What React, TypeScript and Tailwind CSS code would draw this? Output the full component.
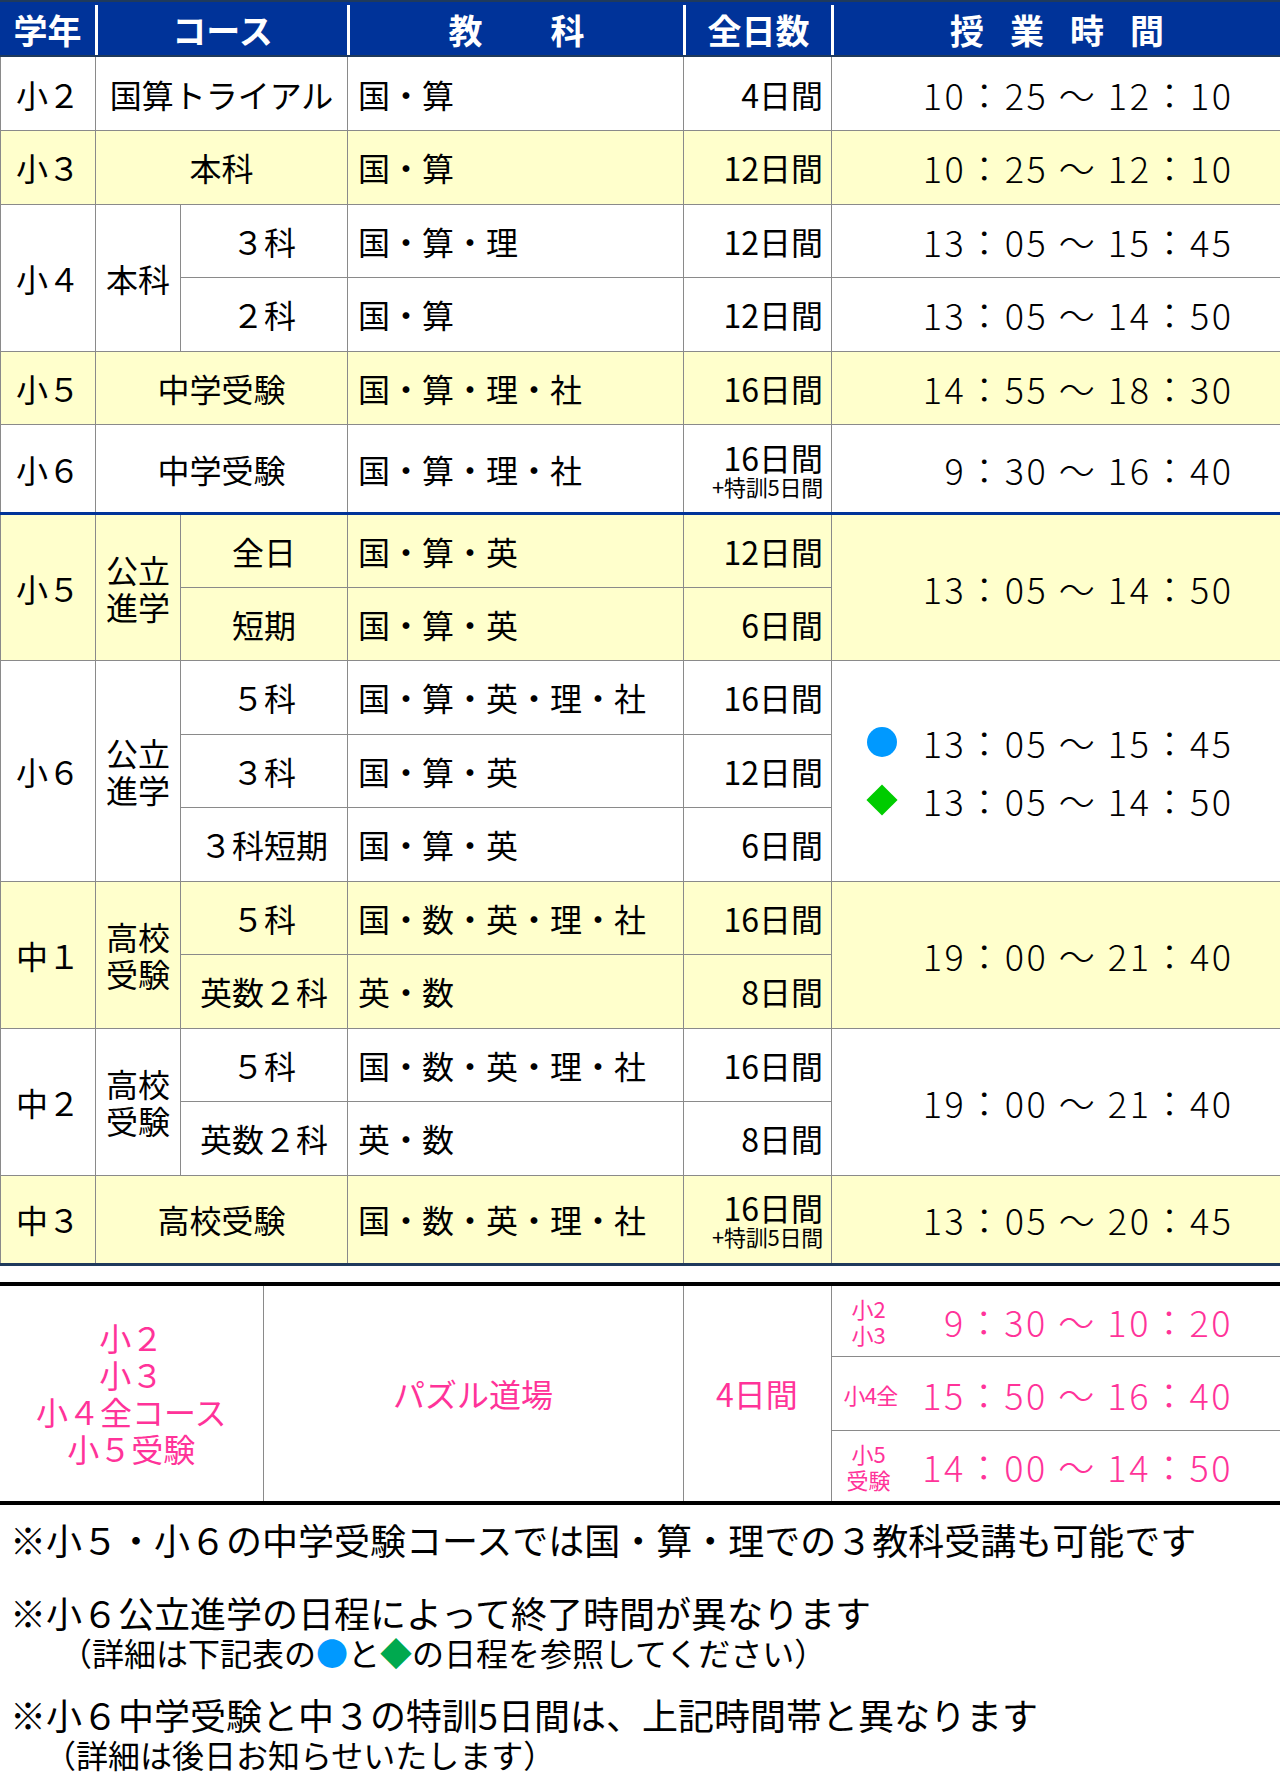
import React from "react"

const Y = "bg-[#ffffcc]"
const td = "border border-[#8a8a8a] p-0"
const grade = `${td} text-center text-[32px] leading-none`
const course = `${td} text-center text-[32px] leading-none`
const subj = `${td} pl-[10px] text-[32px] leading-none`
const days = `${td} text-right pr-[8px] text-[32px] leading-none`
const time = `${td} text-right pr-[47px] text-[36px] leading-none font-light tracking-[0.07em]`

function TwoLine({ a, b }: { a: string; b: string }) {
  return (
    <div className="flex flex-col items-center text-[32px] leading-[37px]">
      <span>{a}</span>
      <span>{b}</span>
    </div>
  )
}

function DaysExtra({ d }: { d: string }) {
  return (
    <div className="flex flex-col items-end">
      <span className="text-[32px] leading-[34px]">{d}</span>
      <span className="text-[22px] leading-[24px] tracking-[-0.01em]">+特訓5日間</span>
    </div>
  )
}

function Header() {
  const sep = "flex items-center justify-center self-stretch mt-[3px] border-l-[3px] border-white"
  return (
    <div className="flex h-[57px] bg-[#003399] border-y-2 border-[#1f3a5c] text-white font-bold text-[34px] leading-none">
      <div className="w-[95px] flex items-center justify-center mt-[3px]">学年</div>
      <div className={`w-[252px] ${sep}`}>コース</div>
      <div className={`w-[336px] ${sep}`}>教　　科</div>
      <div className={`w-[148px] ${sep}`}>全日数</div>
      <div className={`w-[449px] ${sep} gap-[26px]`}>
        <span>授</span>
        <span>業</span>
        <span>時</span>
        <span>間</span>
      </div>
    </div>
  )
}

function MainTable() {
  const row = "h-[73.5px]"
  return (
    <table className="w-full table-fixed border-collapse">
      <colgroup>
        <col className="w-[95px]" />
        <col className="w-[85px]" />
        <col className="w-[167px]" />
        <col className="w-[336px]" />
        <col className="w-[148px]" />
        <col className="w-[449px]" />
      </colgroup>
      <tbody>
        <tr className={row}>
          <td className={`${grade} border-t-0`}>小２</td>
          <td colSpan={2} className={`${course} border-t-0`}>国算トライアル</td>
          <td className={`${subj} border-t-0`}>国・算</td>
          <td className={`${days} border-t-0`}>4日間</td>
          <td className={`${time} border-t-0 border-r-0`}>10：25 ～ 12：10</td>
        </tr>
        <tr className={`${row} ${Y}`}>
          <td className={grade}>小３</td>
          <td colSpan={2} className={course}>本科</td>
          <td className={subj}>国・算</td>
          <td className={days}>12日間</td>
          <td className={`${time} border-r-0`}>10：25 ～ 12：10</td>
        </tr>
        <tr className={row}>
          <td rowSpan={2} className={grade}>小４</td>
          <td rowSpan={2} className={course}>本科</td>
          <td className={course}>３科</td>
          <td className={subj}>国・算・理</td>
          <td className={days}>12日間</td>
          <td className={`${time} border-r-0`}>13：05 ～ 15：45</td>
        </tr>
        <tr className={row}>
          <td className={course}>２科</td>
          <td className={subj}>国・算</td>
          <td className={days}>12日間</td>
          <td className={`${time} border-r-0`}>13：05 ～ 14：50</td>
        </tr>
        <tr className={`${row} ${Y}`}>
          <td className={grade}>小５</td>
          <td colSpan={2} className={course}>中学受験</td>
          <td className={subj}>国・算・理・社</td>
          <td className={days}>16日間</td>
          <td className={`${time} border-r-0`}>14：55 ～ 18：30</td>
        </tr>
        <tr className="h-[89px]">
          <td className={`${grade} border-b-[3px] border-b-[#003399]`}>小６</td>
          <td colSpan={2} className={`${course} border-b-[3px] border-b-[#003399]`}>中学受験</td>
          <td className={`${subj} border-b-[3px] border-b-[#003399]`}>国・算・理・社</td>
          <td className={`${days} border-b-[3px] border-b-[#003399]`}>
            <DaysExtra d="16日間" />
          </td>
          <td className={`${time} border-r-0 border-b-[3px] border-b-[#003399]`}>9：30 ～ 16：40</td>
        </tr>

        <tr className={`${row} ${Y}`}>
          <td rowSpan={2} className={`${grade} border-t-0`}>小５</td>
          <td rowSpan={2} className={`${td} border-t-0`}>
            <TwoLine a="公立" b="進学" />
          </td>
          <td className={`${course} border-t-0`}>全日</td>
          <td className={`${subj} border-t-0`}>国・算・英</td>
          <td className={`${days} border-t-0`}>12日間</td>
          <td rowSpan={2} className={`${time} border-t-0 border-r-0`}>13：05 ～ 14：50</td>
        </tr>
        <tr className={`${row} ${Y}`}>
          <td className={course}>短期</td>
          <td className={subj}>国・算・英</td>
          <td className={days}>6日間</td>
        </tr>

        <tr className={row}>
          <td rowSpan={3} className={grade}>小６</td>
          <td rowSpan={3} className={td}>
            <TwoLine a="公立" b="進学" />
          </td>
          <td className={course}>５科</td>
          <td className={subj}>国・算・英・理・社</td>
          <td className={days}>16日間</td>
          <td rowSpan={3} className={`${td} border-r-0`}>
            <div className="flex flex-col items-end pr-[47px] gap-[20px] text-[36px] leading-[38px] font-light tracking-[0.07em]">
              <div className="flex items-center">
                <span className="w-[30px] h-[30px] rounded-full bg-[#0099ff] mr-[26px]" />
                <span>13：05 ～ 15：45</span>
              </div>
              <div className="flex items-center">
                <span className="w-[22px] h-[22px] rotate-45 bg-[#00cc00] mr-[30px] ml-[4px]" />
                <span>13：05 ～ 14：50</span>
              </div>
            </div>
          </td>
        </tr>
        <tr className={row}>
          <td className={course}>３科</td>
          <td className={subj}>国・算・英</td>
          <td className={days}>12日間</td>
        </tr>
        <tr className={row}>
          <td className={course}>３科短期</td>
          <td className={subj}>国・算・英</td>
          <td className={days}>6日間</td>
        </tr>

        <tr className={`${row} ${Y}`}>
          <td rowSpan={2} className={grade}>中１</td>
          <td rowSpan={2} className={td}>
            <TwoLine a="高校" b="受験" />
          </td>
          <td className={course}>５科</td>
          <td className={subj}>国・数・英・理・社</td>
          <td className={days}>16日間</td>
          <td rowSpan={2} className={`${time} border-r-0`}>19：00 ～ 21：40</td>
        </tr>
        <tr className={`${row} ${Y}`}>
          <td className={course}>英数２科</td>
          <td className={subj}>英・数</td>
          <td className={days}>8日間</td>
        </tr>

        <tr className={row}>
          <td rowSpan={2} className={grade}>中２</td>
          <td rowSpan={2} className={td}>
            <TwoLine a="高校" b="受験" />
          </td>
          <td className={course}>５科</td>
          <td className={subj}>国・数・英・理・社</td>
          <td className={days}>16日間</td>
          <td rowSpan={2} className={`${time} border-r-0`}>19：00 ～ 21：40</td>
        </tr>
        <tr className={row}>
          <td className={course}>英数２科</td>
          <td className={subj}>英・数</td>
          <td className={days}>8日間</td>
        </tr>

        <tr className={`h-[89px] ${Y}`}>
          <td className={`${grade} border-b-[3px] border-b-[#1f3a5c]`}>中３</td>
          <td colSpan={2} className={`${course} border-b-[3px] border-b-[#1f3a5c]`}>高校受験</td>
          <td className={`${subj} border-b-[3px] border-b-[#1f3a5c]`}>国・数・英・理・社</td>
          <td className={`${days} border-b-[3px] border-b-[#1f3a5c]`}>
            <DaysExtra d="16日間" />
          </td>
          <td className={`${time} border-r-0 border-b-[3px] border-b-[#1f3a5c]`}>13：05 ～ 20：45</td>
        </tr>
      </tbody>
    </table>
  )
}

function PuzzleTable() {
  const p = "border border-[#8a8a8a] p-0"
  const t = "text-[36px] leading-none font-light tracking-[0.07em]"
  return (
    <div className="border-y-4 border-black">
      <table className="w-full table-fixed border-collapse text-[#ff3399]">
        <colgroup>
          <col className="w-[263px]" />
          <col className="w-[420px]" />
          <col className="w-[148px]" />
          <col className="w-[449px]" />
        </colgroup>
        <tbody>
          <tr className="h-[71px]">
            <td rowSpan={3} className={`${p} border-y-0 border-l-0`}>
              <div className="flex flex-col items-center text-[32px] leading-[37px]">
                <span>小２</span>
                <span>小３</span>
                <span>小４全コース</span>
                <span>小５受験</span>
              </div>
            </td>
            <td rowSpan={3} className={`${p} border-y-0 text-center text-[32px] leading-none`}>パズル道場</td>
            <td rowSpan={3} className={`${p} border-y-0 text-center text-[32px] leading-none`}>4日間</td>
            <td className={`${p} border-t-0 border-r-0`}>
              <div className="flex items-center">
                <div className="w-[74px] flex flex-col items-center text-[22px] leading-[26px]">
                  <span>小2</span>
                  <span>小3</span>
                </div>
                <div className={`flex-1 text-right pr-[47px] ${t}`}>9：30 ～ 10：20</div>
              </div>
            </td>
          </tr>
          <tr className="h-[74px]">
            <td className={`${p} border-r-0`}>
              <div className="flex items-center">
                <div className="w-[78px] flex flex-col items-center text-[22px] leading-[26px] tracking-[-0.03em]">
                  <span>小4全</span>
                </div>
                <div className={`flex-1 text-right pr-[47px] ${t}`}>15：50 ～ 16：40</div>
              </div>
            </td>
          </tr>
          <tr className="h-[70px]">
            <td className={`${p} border-b-0 border-r-0`}>
              <div className="flex items-center">
                <div className="w-[74px] flex flex-col items-center text-[22px] leading-[26px]">
                  <span>小5</span>
                  <span>受験</span>
                </div>
                <div className={`flex-1 text-right pr-[47px] ${t}`}>14：00 ～ 14：50</div>
              </div>
            </td>
          </tr>
        </tbody>
      </table>
    </div>
  )
}

function Notes() {
  return (
    <div className="pt-[14px] pl-[10px] text-black">
      <p className="text-[36px] leading-[40px] whitespace-nowrap">※小５・小６の中学受験コースでは国・算・理での３教科受講も可能です</p>
      <p className="mt-[33px] text-[36px] leading-[40px] whitespace-nowrap">※小６公立進学の日程によって終了時間が異なります</p>
      <p className="pl-[50px] text-[32px] leading-[40px] whitespace-nowrap">
        （詳細は下記表の<span className="text-[#0099ff]">●</span>と<span className="text-[#00a94f]">◆</span>の日程を参照してください）
      </p>
      <p className="mt-[22px] text-[36px] leading-[40px] whitespace-nowrap">※小６中学受験と中３の特訓5日間は、上記時間帯と異なります</p>
      <p className="pl-[34px] text-[32px] leading-[40px] whitespace-nowrap">（詳細は後日お知らせいたします）</p>
    </div>
  )
}

export default function App() {
  return (
    <div className="w-[1280px] h-[1785px] bg-white text-black font-['Noto_Sans_CJK_JP',sans-serif] overflow-hidden">
      <Header />
      <MainTable />
      <div className="h-[16px]" />
      <PuzzleTable />
      <Notes />
    </div>
  )
}
